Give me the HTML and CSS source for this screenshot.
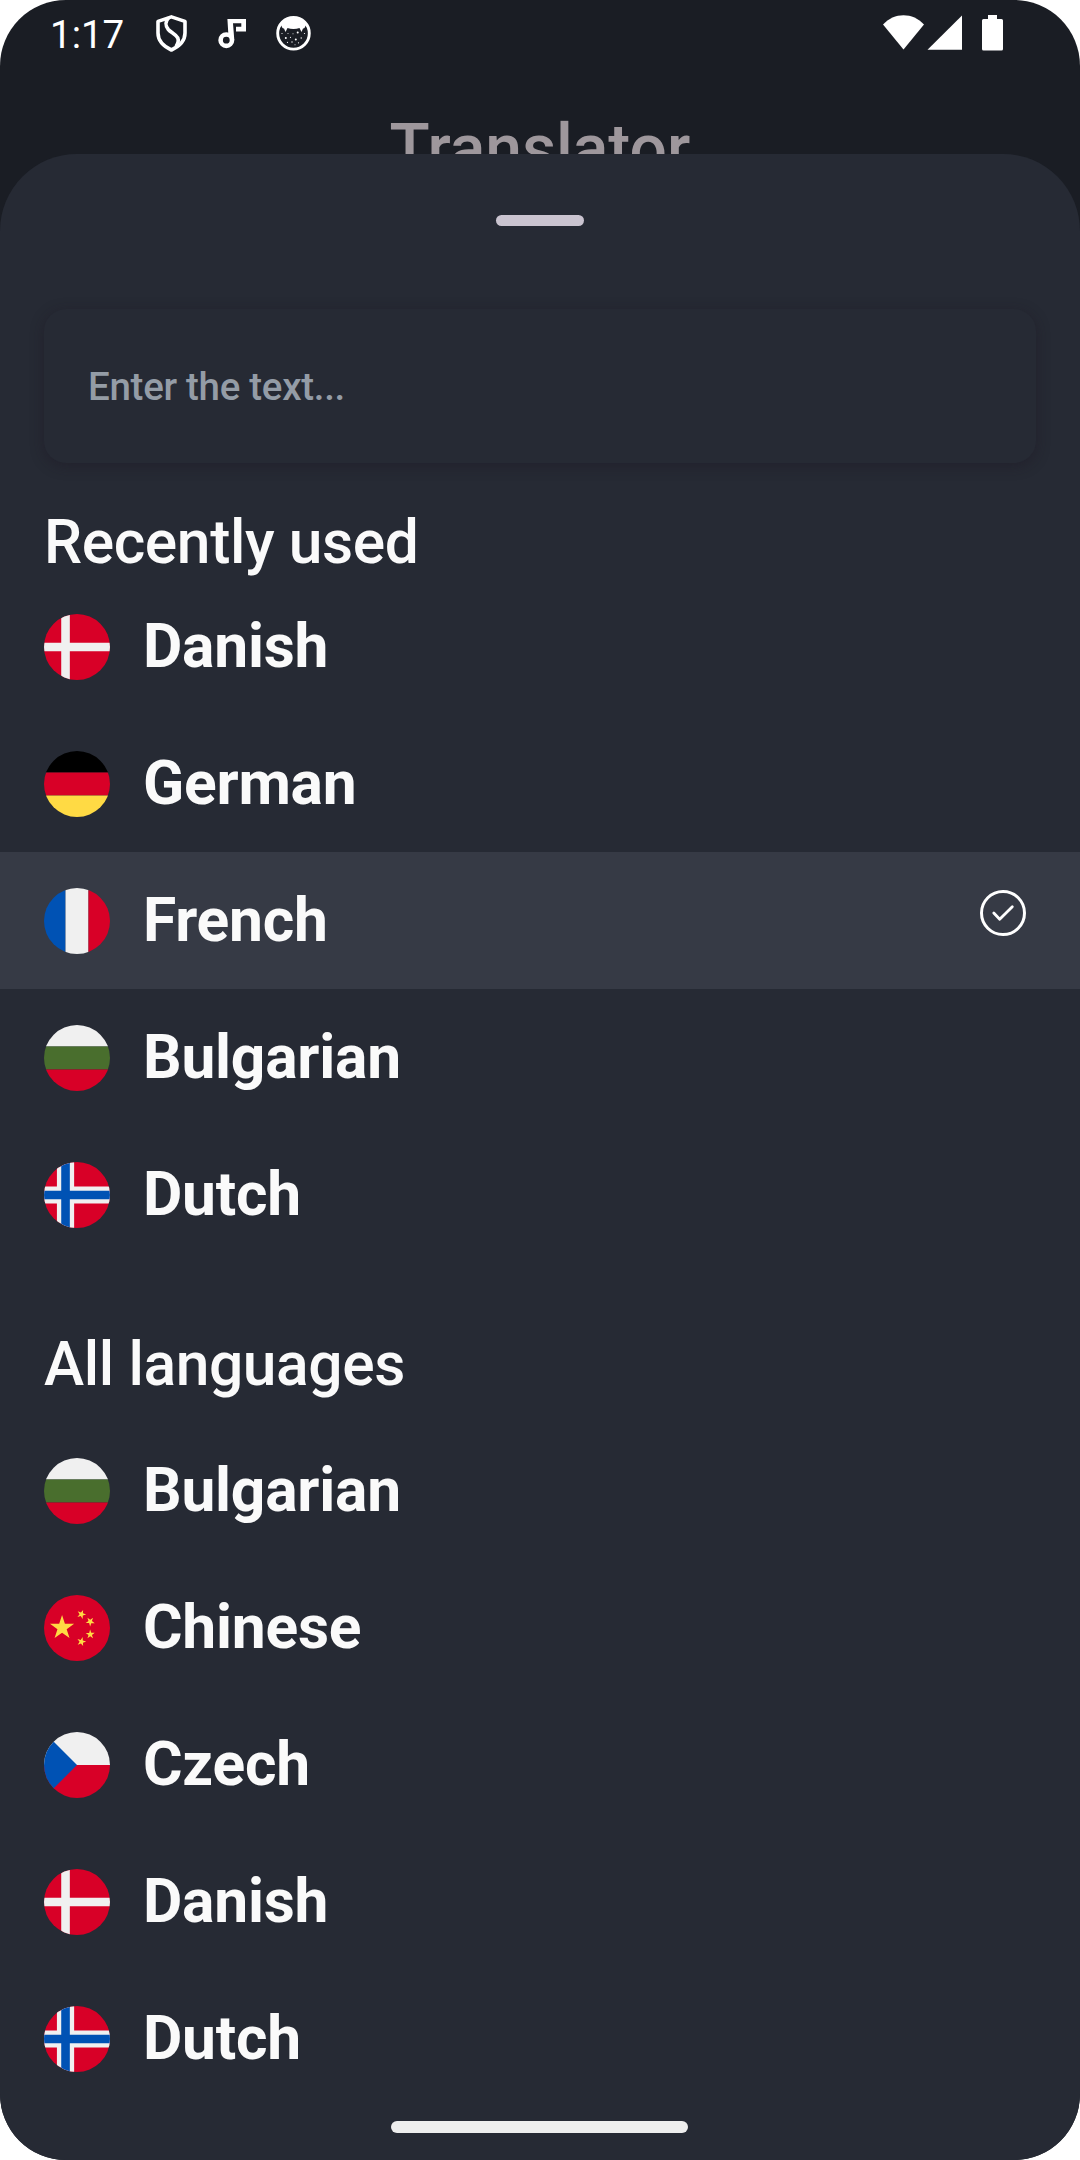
FILE: index.html
```html
<!DOCTYPE html>
<html lang="en">
<head>
<meta charset="utf-8">
<title>Translator</title>
<link rel="stylesheet" href="styles.css">
</head>
<body>
<svg class="defs" aria-hidden="true">
  <symbol id="flag-dk" viewBox="0 0 512 512">
    <path fill="#d80027" d="M0 0h512v512H0z"/>
    <path fill="#f0f0f0" d="M0 222.6h133.6V0h66.8v222.6H512v66.8H200.4V512h-66.8V289.4H0z"/>
  </symbol>
  <symbol id="flag-de" viewBox="0 0 512 512">
    <path fill="#000" d="M0 0h512v167H0z"/>
    <path fill="#d80027" d="M0 167h512v178H0z"/>
    <path fill="#ffda44" d="M0 345h512v167H0z"/>
  </symbol>
  <symbol id="flag-fr" viewBox="0 0 512 512">
    <path fill="#0052b4" d="M0 0h167v512H0z"/>
    <path fill="#f0f0f0" d="M167 0h178v512H167z"/>
    <path fill="#d80027" d="M345 0h167v512H345z"/>
  </symbol>
  <symbol id="flag-bg" viewBox="0 0 512 512">
    <path fill="#f0f0f0" d="M0 0h512v167H0z"/>
    <path fill="#496e2d" d="M0 167h512v178H0z"/>
    <path fill="#d80027" d="M0 345h512v167H0z"/>
  </symbol>
  <symbol id="flag-no" viewBox="0 0 512 512">
    <path fill="#d80027" d="M0 0h512v512H0z"/>
    <path fill="#f0f0f0" d="M0 189.2h100.2V0h133.6v189.2H512v133.6H233.8V512H100.2V322.8H0z"/>
    <path fill="#0052b4" d="M0 222.6h133.6V0h66.8v222.6H512v66.8H200.4V512h-66.8V289.4H0z"/>
  </symbol>
  <symbol id="flag-cn" viewBox="0 0 512 512">
    <path fill="#d80027" d="M0 0h512v512H0z"/>
    <path fill="#ffda44" d="M140.1 155.8l22.1 68h71.5l-57.8 42.1 22.1 68-57.9-42-57.9 42 22.2-68-57.9-42.1H118z"/>
    <g fill="#ffda44">
      <path d="M303.5 396.5l-16.9-20.8-25 9.7 14.5-22.5-16.9-20.9 25.9 6.9 14.6-22.5 1.4 26.8 26 6.9-25.1 9.6z"/>
      <path d="M337.1 335.5l8-25.6-21.9-15.5 26.8-.4 7.9-25.6 8.7 25.4 26.8-.3-21.5 16 8.6 25.4-21.9-15.5z"/>
    </g>
    <g fill="#ffda44" transform="matrix(1 0 0 -1 0 512)">
      <path d="M303.5 396.5l-16.9-20.8-25 9.7 14.5-22.5-16.9-20.9 25.9 6.9 14.6-22.5 1.4 26.8 26 6.9-25.1 9.6z"/>
      <path d="M337.1 335.5l8-25.6-21.9-15.5 26.8-.4 7.9-25.6 8.7 25.4 26.8-.3-21.5 16 8.6 25.4-21.9-15.5z"/>
    </g>
  </symbol>
  <symbol id="flag-cz" viewBox="0 0 512 512">
    <path fill="#f0f0f0" d="M0 0h512v256H0z"/>
    <path fill="#d80027" d="M0 256h512v256H0z"/>
    <path fill="#0052b4" d="M0 0l256 256L0 512z"/>
  </symbol>
</svg>

<div class="phone">
  <header class="status">
    <span class="clock">1:17</span>
    <div class="notifications">
      <svg class="shield" viewBox="0 0 31 37" fill="none" stroke="#fff" stroke-width="3.6" stroke-linejoin="round">
        <path d="M15.400 1.900L29 6.400v11.600C29 25.500 23 31.500 15.400 35 8 31.500 2 25.500 2 18V6.400z"/>
        <path d="M12.500 3C9.500 6 9 10.500 12.300 14.500 15 17.600 19.500 19 21.800 23 23 26 22 28.500 20 31.500"/>
      </svg>
      <svg class="note" viewBox="0 0 29 30">
        <path d="M9.400 0H28v12.400H18V7.700h5.300V4.300H15L16.300 21h-5.600z" fill="#fff"/>
        <circle cx="8.300" cy="21.200" r="5.700" fill="#1a1d24" stroke="#fff" stroke-width="4.600"/>
      </svg>
      <svg class="cat" viewBox="0 0 37 37">
        <circle cx="18.500" cy="18.300" r="15.800" fill="none" stroke="#fff" stroke-width="2.900"/>
        <path d="M6 10C10 1 27 1 31 10Q29.500 14 28 13.500L26.500 17 24.500 13C21 14.200 16 14.200 12.500 13L10.500 17 9 13.500Q7.500 14 6 10z" fill="#fff"/>
        <g fill="#fff">
          <circle cx="10.800" cy="23" r="1"/><circle cx="15.500" cy="22.300" r=".6"/>
          <circle cx="20.800" cy="24.500" r="1"/><circle cx="26.200" cy="23" r=".7"/>
          <circle cx="22.700" cy="17.500" r="1"/><circle cx="18" cy="18.700" r=".5"/>
          <circle cx="13" cy="18.500" r=".5"/><circle cx="7" cy="18.500" r=".6"/>
          <circle cx="29.500" cy="18.500" r=".6"/><circle cx="12.500" cy="27.300" r=".6"/>
          <circle cx="17" cy="27" r=".7"/><circle cx="23.500" cy="27.800" r=".6"/>
          <circle cx="20" cy="29.800" r=".5"/>
        </g>
      </svg>
    </div>
    <svg class="signals" viewBox="0 0 121 37" fill="#fff">
      <path d="M0 9.500C11-3 30-3 41 9.500L20.500 34.500z"/>
      <path d="M79 .500V34.800H44.500z"/>
      <path d="M105 0h9v4h4.500q1.500 0 1.500 1.500v28.500q0 1.500-1.500 1.500h-18q-1.500 0-1.500-1.500V5.500Q99 4 100.500 4h4.500z"/>
    </svg>
  </header>

  <h1 class="title">Translator</h1>

  <main class="sheet">
    <div class="handle"></div>
    <div class="search">Enter the text...</div>

    <h2 class="heading">Recently used</h2>
    <ul class="languages">
      <li class="language"><svg class="flag"><use href="#flag-dk"/></svg><span>Danish</span></li>
      <li class="language"><svg class="flag"><use href="#flag-de"/></svg><span>German</span></li>
      <li class="language selected"><svg class="flag"><use href="#flag-fr"/></svg><span>French</span>
        <svg class="check" viewBox="0 0 46 46" fill="none" stroke="#fff" stroke-linecap="round" stroke-linejoin="round">
          <circle cx="23" cy="23" r="21.500" stroke-width="3"/>
          <path d="M13.800 23L19.700 29.200 32.300 16.800" stroke-width="2.800"/>
        </svg>
      </li>
      <li class="language"><svg class="flag"><use href="#flag-bg"/></svg><span>Bulgarian</span></li>
      <li class="language"><svg class="flag"><use href="#flag-no"/></svg><span>Dutch</span></li>
    </ul>

    <h2 class="heading all">All languages</h2>
    <ul class="languages">
      <li class="language"><svg class="flag"><use href="#flag-bg"/></svg><span>Bulgarian</span></li>
      <li class="language"><svg class="flag"><use href="#flag-cn"/></svg><span>Chinese</span></li>
      <li class="language"><svg class="flag"><use href="#flag-cz"/></svg><span>Czech</span></li>
      <li class="language"><svg class="flag"><use href="#flag-dk"/></svg><span>Danish</span></li>
      <li class="language"><svg class="flag"><use href="#flag-no"/></svg><span>Dutch</span></li>
    </ul>
    <div class="gesture-bar"></div>
  </main>
</div>
</body>
</html>
```
FILE: styles.css
```css
* { box-sizing: border-box; margin: 0; padding: 0; }

body {
  background: #fff;
  font-family: Roboto, "Liberation Sans", sans-serif;
  color: #fafafa;
}

.defs { display: block; width: 0; height: 0; }

.phone {
  display: flex;
  flex-direction: column;
  width: 1080px;
  height: 2160px;
  overflow: hidden;
  border-radius: 66px;
  background: #1a1d24;
}

.status {
  display: flex;
  align-items: flex-start;
  flex: none;
  height: 66px;
  padding: 15px 76px 0 50px;
}

.clock {
  width: 106px;
  font-size: 38.5px;
  line-height: 40px;
  color: #fff;
}

.notifications { display: flex; align-items: flex-start; flex: 1; }
.shield { width: 31px; height: 37px; }
.note { width: 29px; height: 30px; margin: 4px 0 0 31px; }
.cat { width: 37px; height: 37px; margin: 0 0 0 28px; }
.signals { width: 121px; height: 37px; }

.title {
  flex: none;
  height: 88px;
  padding-top: 44px;
  font-size: 66px;
  font-weight: 500;
  line-height: 77px;
  text-align: center;
  color: #9e979c;
}

.sheet {
  position: relative;
  display: flex;
  flex-direction: column;
  flex: 1;
  min-height: 0;
  overflow: hidden;
  padding-top: 61px;
  border-radius: 77px 77px 0 0;
  background: #262a34;
}

.handle {
  align-self: center;
  flex: none;
  width: 88px;
  height: 11px;
  border-radius: 6px;
  background: #cac4d0;
}

.search {
  flex: none;
  height: 154px;
  margin: 83px 44px 44px;
  padding: 0 44px;
  border-radius: 22px;
  background: #262a34;
  box-shadow: 0 3px 14px rgba(28, 22, 34, .42);
  font-size: 38.5px;
  font-weight: 500;
  letter-spacing: -0.29px;
  line-height: 156px;
  color: #949ca6;
}

.heading {
  flex: none;
  padding-left: 44px;
  font-size: 60.5px;
  font-weight: 500;
  letter-spacing: -0.4px;
  line-height: 71px;
}

.heading.all { margin: 66px 0 22px; }

.languages { flex: none; list-style: none; }

.language {
  display: flex;
  align-items: center;
  gap: 33px;
  height: 137px;
  padding: 0 54px 0 44px;
  font-size: 60.5px;
  font-weight: 700;
  letter-spacing: -0.22px;
  line-height: 137px;
}

.language.selected { background: #363a45; }

.flag {
  flex: none;
  width: 66px;
  height: 66px;
  margin-top: 1px;
  border-radius: 50%;
}

.check {
  width: 46px;
  height: 46px;
  margin: 0 0 15px auto;
}

.gesture-bar {
  position: absolute;
  left: 391px;
  bottom: 27px;
  width: 297px;
  height: 12px;
  border-radius: 6px;
  background: #eee;
}
```
